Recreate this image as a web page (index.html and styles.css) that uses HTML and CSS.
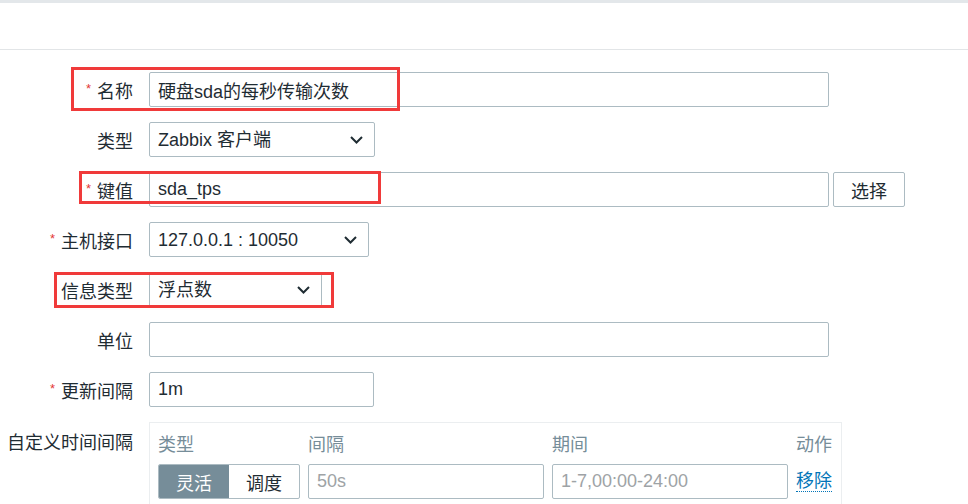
FILE: index.html
```html
<!DOCTYPE html>
<html lang="zh">
<head>
    <meta charset="UTF-8">
    <title>监控项</title>
    <link rel="stylesheet" href="styles.css">
</head>
<body>
    <div class="topbar"></div>
    <div class="header"></div>

    <form class="item-form">
        <div class="row">
            <label class="required">名称</label>
            <input type="text" class="field wide" value="硬盘sda的每秒传输次数">
            <div class="mark mark-name"></div>
        </div>

        <div class="row">
            <label>类型</label>
            <div class="select-wrap w-type">
                <select class="field"><option>Zabbix 客户端</option></select>
                <svg class="chevron" width="13" height="8" viewBox="0 0 13 8"><polyline points="1,1 6.5,6.5 12,1" fill="none" stroke="#1f2c33" stroke-width="2"/></svg>
            </div>
        </div>

        <div class="row">
            <label class="required">键值</label>
            <div class="with-button">
                <input type="text" class="field wide" value="sda_tps">
                <button type="button" class="btn">选择</button>
            </div>
            <div class="mark mark-key"></div>
        </div>

        <div class="row">
            <label class="required">主机接口</label>
            <div class="select-wrap w-iface">
                <select class="field"><option>127.0.0.1 : 10050</option></select>
                <svg class="chevron" width="13" height="8" viewBox="0 0 13 8"><polyline points="1,1 6.5,6.5 12,1" fill="none" stroke="#1f2c33" stroke-width="2"/></svg>
            </div>
        </div>

        <div class="row">
            <label>信息类型</label>
            <div class="select-wrap w-info">
                <select class="field"><option>浮点数</option></select>
                <svg class="chevron" width="13" height="8" viewBox="0 0 13 8"><polyline points="1,1 6.5,6.5 12,1" fill="none" stroke="#1f2c33" stroke-width="2"/></svg>
            </div>
            <div class="mark mark-info"></div>
        </div>

        <div class="row">
            <label>单位</label>
            <input type="text" class="field wide">
        </div>

        <div class="row">
            <label class="required">更新间隔</label>
            <input type="text" class="field w-delay" value="1m">
        </div>

        <div class="row row-top">
            <label>自定义时间间隔</label>
            <div class="intervals">
                <div class="th">类型</div>
                <div class="th">间隔</div>
                <div class="th">期间</div>
                <div class="th">动作</div>

                <div class="toggle">
                    <span class="on">灵活</span>
                    <span>调度</span>
                </div>
                <input type="text" class="field" placeholder="50s">
                <input type="text" class="field" placeholder="1-7,00:00-24:00">
                <a href="#" class="link">移除</a>
            </div>
        </div>
    </form>
</body>
</html>
```

FILE: styles.css
```css
body {
    margin: 0;
    font-family: "Liberation Sans", "Noto Sans CJK SC", sans-serif;
    font-size: 18px;
    color: #1f2c33;
    background-color: #fff;
    overflow: hidden;
}

.topbar {
    height: 3px;
    background-color: #e3e7ea;
}

.header {
    height: 46px;
    border-bottom: 1px solid #e2e5e7;
}

.item-form {
    padding-top: 22px;
}

.row {
    position: relative;
    display: grid;
    grid-template-columns: 133px auto;
    column-gap: 16px;
    align-items: center;
    height: 35px;
    margin-bottom: 15px;
}

.row label {
    text-align: right;
    white-space: nowrap;
}

.required::before {
    content: "*";
    color: #e33734;
    font-size: 13px;
    vertical-align: 5px;
    margin-right: 6px;
}

.field {
    box-sizing: border-box;
    height: 35px;
    padding: 0 8px;
    font-family: inherit;
    font-size: 18px;
    color: #1f2c33;
    background-color: #fff;
    border: 1px solid #acbbc2;
    border-radius: 2px;
    outline: none;
}

.field::placeholder {
    color: #9ea3a6;
}

.wide {
    width: 680px;
}

.w-delay {
    width: 225px;
}

.select-wrap {
    position: relative;
}

.select-wrap select {
    width: 100%;
    appearance: none;
    -webkit-appearance: none;
}

.w-type { width: 226px; }
.w-iface { width: 220px; }
.w-info { width: 173px; }

.chevron {
    position: absolute;
    right: 12px;
    top: 14px;
}

.with-button {
    display: flex;
    gap: 4px;
}

.btn {
    box-sizing: border-box;
    width: 72px;
    height: 35px;
    font-family: inherit;
    font-size: 18px;
    color: #1f2c33;
    background-color: #fff;
    border: 1px solid #acbbc2;
    border-radius: 2px;
}

/* red annotation frames */
.mark {
    position: absolute;
    border: 3px solid #f03a3a;
    pointer-events: none;
}

.mark-name {
    left: 71px;
    top: -5px;
    width: 323px;
    height: 38px;
}

.mark-key {
    left: 79px;
    top: -1px;
    width: 296px;
    height: 27px;
}

.mark-info {
    left: 54px;
    top: 0;
    width: 274px;
    height: 30px;
}

.row-top {
    align-items: start;
    height: auto;
}

.row-top label {
    padding-top: 10px;
    line-height: 22px;
}

.intervals {
    width: 693px;
    box-sizing: border-box;
    padding: 11px 6px 10px 8px;
    border: 1px solid #ebeef0;
    display: grid;
    grid-template-columns: 142px 236px 236px auto;
    column-gap: 8px;
    row-gap: 8px;
    align-items: center;
}

.th {
    line-height: 22px;
    color: #768d99;
    white-space: nowrap;
}

.toggle {
    display: flex;
    height: 35px;
    box-sizing: border-box;
    border: 1px solid #acbbc2;
    border-radius: 2px;
    overflow: hidden;
}

.toggle span {
    flex: 1;
    display: flex;
    align-items: center;
    justify-content: center;
}

.toggle .on {
    color: #fff;
    background-color: #768d99;
}

.link {
    color: #0275b8;
    text-decoration: none;
    border-bottom: 1px dotted #0275b8;
    justify-self: start;
    line-height: 20px;
    white-space: nowrap;
}
```
